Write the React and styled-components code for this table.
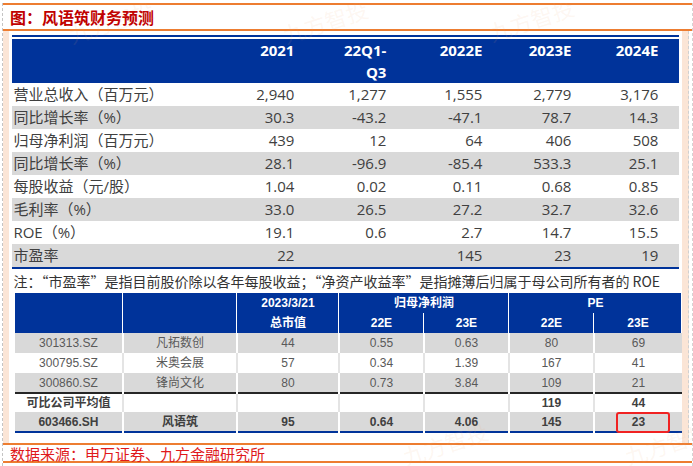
import React from "react";
import styled, { createGlobalStyle } from "styled-components";

const NAVY = "#00339a";
const ORANGE = "#ed7d31";
const PEACH = "#fbe5d6";
const SHADE = "#d9d9d9";

const GlobalStyle = createGlobalStyle`
  html, body {
    margin: 0;
    padding: 0;
    background: #fff;
  }
  body {
    font-family: "Open Sans", "Noto Sans CJK SC", sans-serif;
  }
`;

const forecastHead = ["2021", ["22Q1-", "Q3"], "2022E", "2023E", "2024E"];

const forecast = [
  { label: "营业总收入（百万元）", values: ["2,940", "1,277", "1,555", "2,779", "3,176"] },
  { label: "同比增长率（%）", values: ["30.3", "-43.2", "-47.1", "78.7", "14.3"] },
  { label: "归母净利润（百万元）", values: ["439", "12", "64", "406", "508"] },
  { label: "同比增长率（%）", values: ["28.1", "-96.9", "-85.4", "533.3", "25.1"] },
  { label: "每股收益（元/股）", values: ["1.04", "0.02", "0.11", "0.68", "0.85"] },
  { label: "毛利率（%）", values: ["33.0", "26.5", "27.2", "32.7", "32.6"] },
  { label: "ROE（%）", values: ["19.1", "0.6", "2.7", "14.7", "15.5"] },
  { label: "市盈率", values: ["22", "", "145", "23", "19"] },
];

const peers = [
  ["301313.SZ", "凡拓数创", "44", "0.55", "0.63", "80", "69"],
  ["300795.SZ", "米奥会展", "57", "0.34", "1.39", "167", "41"],
  ["300860.SZ", "锋尚文化", "80", "0.73", "3.84", "109", "21"],
];

const average = ["可比公司平均值", "", "", "", "", "119", "44"];
const target = ["603466.SH", "风语筑", "95", "0.64", "4.06", "145", "23"];

const mainCols = [211, 92, 92, 96, 89, 87];
const peerCols = [108, 114, 102, 85, 85, 85, 88];

const watermarks = [
  { left: 64, top: 6 },
  { left: 278, top: 6 },
  { left: 484, top: 4 },
  { left: 398, top: 428 },
  { left: 620, top: 428 },
];

const App = () => {
  return (
    <>
      <GlobalStyle />
      <Frame>
        <Title>图：风语筑财务预测</Title>
        <Body>
          <Margin />
          <Panel>
            <ForecastWrap>
              <ForecastTable>
                <colgroup>
                  {mainCols.map((w, i) => (
                    <col key={i} style={{ width: w }} />
                  ))}
                </colgroup>
                <thead>
                  <tr>
                    <HeadCell />
                    {forecastHead.map((h, i) => (
                      <HeadCell key={i}>
                        {Array.isArray(h) ? (
                          <>
                            {h[0]}
                            <br />
                            {h[1]}
                          </>
                        ) : (
                          h
                        )}
                      </HeadCell>
                    ))}
                  </tr>
                </thead>
                <tbody>
                  {forecast.map((row, i) => (
                    <ForecastRow key={i} shaded={i % 2 === 1}>
                      <LabelCell>{row.label}</LabelCell>
                      {row.values.map((v, j) => (
                        <NumCell key={j}>{v}</NumCell>
                      ))}
                    </ForecastRow>
                  ))}
                </tbody>
              </ForecastTable>
            </ForecastWrap>
            <Note>
              注：“市盈率”是指目前股价除以各年每股收益；“净资产收益率”是指摊薄后归属于母公司所有者的 ROE
            </Note>
            <PeerTable>
              <colgroup>
                {peerCols.map((w, i) => (
                  <col key={i} style={{ width: w }} />
                ))}
              </colgroup>
              <thead>
                <tr>
                  <PeerHead rowSpan={2} />
                  <PeerHead rowSpan={2} />
                  <PeerHead rowSpan={2}>
                    2023/3/21
                    <br />
                    总市值
                  </PeerHead>
                  <PeerHead colSpan={2}>归母净利润</PeerHead>
                  <PeerHead colSpan={2}>PE</PeerHead>
                </tr>
                <tr>
                  <PeerHead>22E</PeerHead>
                  <PeerHead>23E</PeerHead>
                  <PeerHead>22E</PeerHead>
                  <PeerHead>23E</PeerHead>
                </tr>
              </thead>
              <tbody>
                {peers.map((row, i) => (
                  <PeerRow key={i} shaded={i % 2 === 0}>
                    {row.map((v, j) => (
                      <PeerCell key={j} shaded={i % 2 === 0}>
                        {v}
                      </PeerCell>
                    ))}
                  </PeerRow>
                ))}
                <PeerRow divider>
                  {average.map((v, j) => (
                    <PeerCell key={j} bold>
                      {v}
                    </PeerCell>
                  ))}
                </PeerRow>
                <PeerRow shaded last>
                  {target.map((v, j) => (
                    <PeerCell key={j} shaded bold>
                      {j === target.length - 1 && <Highlight />}
                      {v}
                    </PeerCell>
                  ))}
                </PeerRow>
              </tbody>
            </PeerTable>
          </Panel>
          <Margin right />
        </Body>
        <Source>数据来源：申万证券、九方金融研究所</Source>
        {watermarks.map((w, i) => (
          <Watermark key={i} style={{ left: w.left, top: w.top }}>
            九方智投
          </Watermark>
        ))}
      </Frame>
    </>
  );
};

const Frame = styled.div`
  position: relative;
  width: 689px;
  height: 463px;
  margin: 3px 0 0 2px;
  border-left: 1px dashed #c4c4c4;
  border-right: 1px dashed #d4d4d4;
  overflow: hidden;
  display: flex;
  flex-direction: column;
`;

const Title = styled.div`
  height: 24px;
  padding-left: 7px;
  border-top: 2px solid ${ORANGE};
  border-bottom: 2px solid ${ORANGE};
  display: flex;
  align-items: center;
  font-family: "Noto Sans CJK SC", sans-serif;
  font-size: 16px;
  font-weight: 700;
  color: #c00000;
`;

const Body = styled.div`
  height: 412px;
  display: flex;
  padding-right: 3px;
`;

const Margin = styled.div`
  width: ${({ right }) => (right ? "6px" : "7px")};
  background: ${PEACH};
  border-right: ${({ right }) => (right ? "1px dashed #d0d0d0" : "none")};
`;

const Panel = styled.div`
  flex: 1;
  padding-top: 4px;
  display: flex;
  flex-direction: column;
  position: relative;
  z-index: 1;
`;

const ForecastWrap = styled.div`
  width: 667px;
  margin-left: 3px;
  border-top: 2px solid ${NAVY};
  border-bottom: 2px solid ${NAVY};
  padding-top: 2px;
`;

const ForecastTable = styled.table`
  width: 667px;
  table-layout: fixed;
  border-collapse: collapse;
  color: #404040;
  font-size: 15px;
`;

const HeadCell = styled.th`
  height: 43px;
  padding: 0 21px 0 0;
  background: ${NAVY};
  color: #fff;
  font-weight: 700;
  font-size: 15px;
  line-height: 22px;
  text-align: right;
  vertical-align: top;
`;

const ForecastRow = styled.tr`
  height: 23px;
  background: ${({ shaded }) => (shaded ? SHADE : "#fff")};
`;

const LabelCell = styled.td`
  padding: 0 0 0 1px;
  white-space: nowrap;
  line-height: 23px;
`;

const NumCell = styled.td`
  padding: 0 21px 0 0;
  text-align: right;
  line-height: 23px;
`;

const Note = styled.div`
  height: 24px;
  padding-left: 4px;
  display: flex;
  align-items: center;
  font-family: "Noto Sans CJK SC", sans-serif;
  font-size: 14px;
  color: #333;
  white-space: nowrap;
`;

const PeerTable = styled.table`
  width: 667px;
  margin-left: 5px;
  table-layout: fixed;
  border-collapse: collapse;
  font-family: "Liberation Sans", "Noto Sans CJK SC", sans-serif;
  font-size: 12px;
  color: #595959;
  text-align: center;
`;

const PeerHead = styled.th`
  height: 20px;
  padding: 0;
  background: ${NAVY};
  color: #fff;
  font-weight: 700;
  font-size: 12px;
  line-height: 20px;
  border-left: 1px solid #fff;
  border-right: 1px solid #fff;
`;

const PeerRow = styled.tr`
  height: ${({ divider }) => (divider ? "18px" : "20px")};
  background: ${({ shaded }) => (shaded ? SHADE : "#fff")};
  border-top: ${({ divider }) => (divider ? "2px solid #262626" : "none")};
  border-bottom: ${({ last }) => (last ? `2px solid ${NAVY}` : "none")};
`;

const PeerCell = styled.td`
  position: relative;
  padding: 0;
  line-height: 18px;
  font-weight: ${({ bold }) => (bold ? 700 : 400)};
  color: ${({ bold }) => (bold ? "#404040" : "#595959")};
  border-left: 2px solid ${({ shaded }) => (shaded ? "#fff" : "#e4e4e4")};
  &:first-child {
    border-left: none;
  }
`;

const Highlight = styled.span`
  position: absolute;
  left: 21px;
  top: 0;
  width: 50px;
  height: 17px;
  border: 2px solid #f02222;
  border-radius: 3px;
`;

const Source = styled.div`
  height: 16px;
  padding-left: 7px;
  border-top: 2px solid ${ORANGE};
  border-bottom: 2px solid ${ORANGE};
  display: flex;
  align-items: center;
  font-family: "Noto Sans CJK SC", sans-serif;
  font-size: 15px;
  color: #e0191b;
`;

const Watermark = styled.span`
  position: absolute;
  z-index: 2;
  font-family: "Noto Sans CJK SC", sans-serif;
  font-size: 22px;
  line-height: 24px;
  color: rgba(244, 170, 120, 0.1);
  transform: rotate(-18deg);
  pointer-events: none;
  white-space: nowrap;
`;

export default App;
